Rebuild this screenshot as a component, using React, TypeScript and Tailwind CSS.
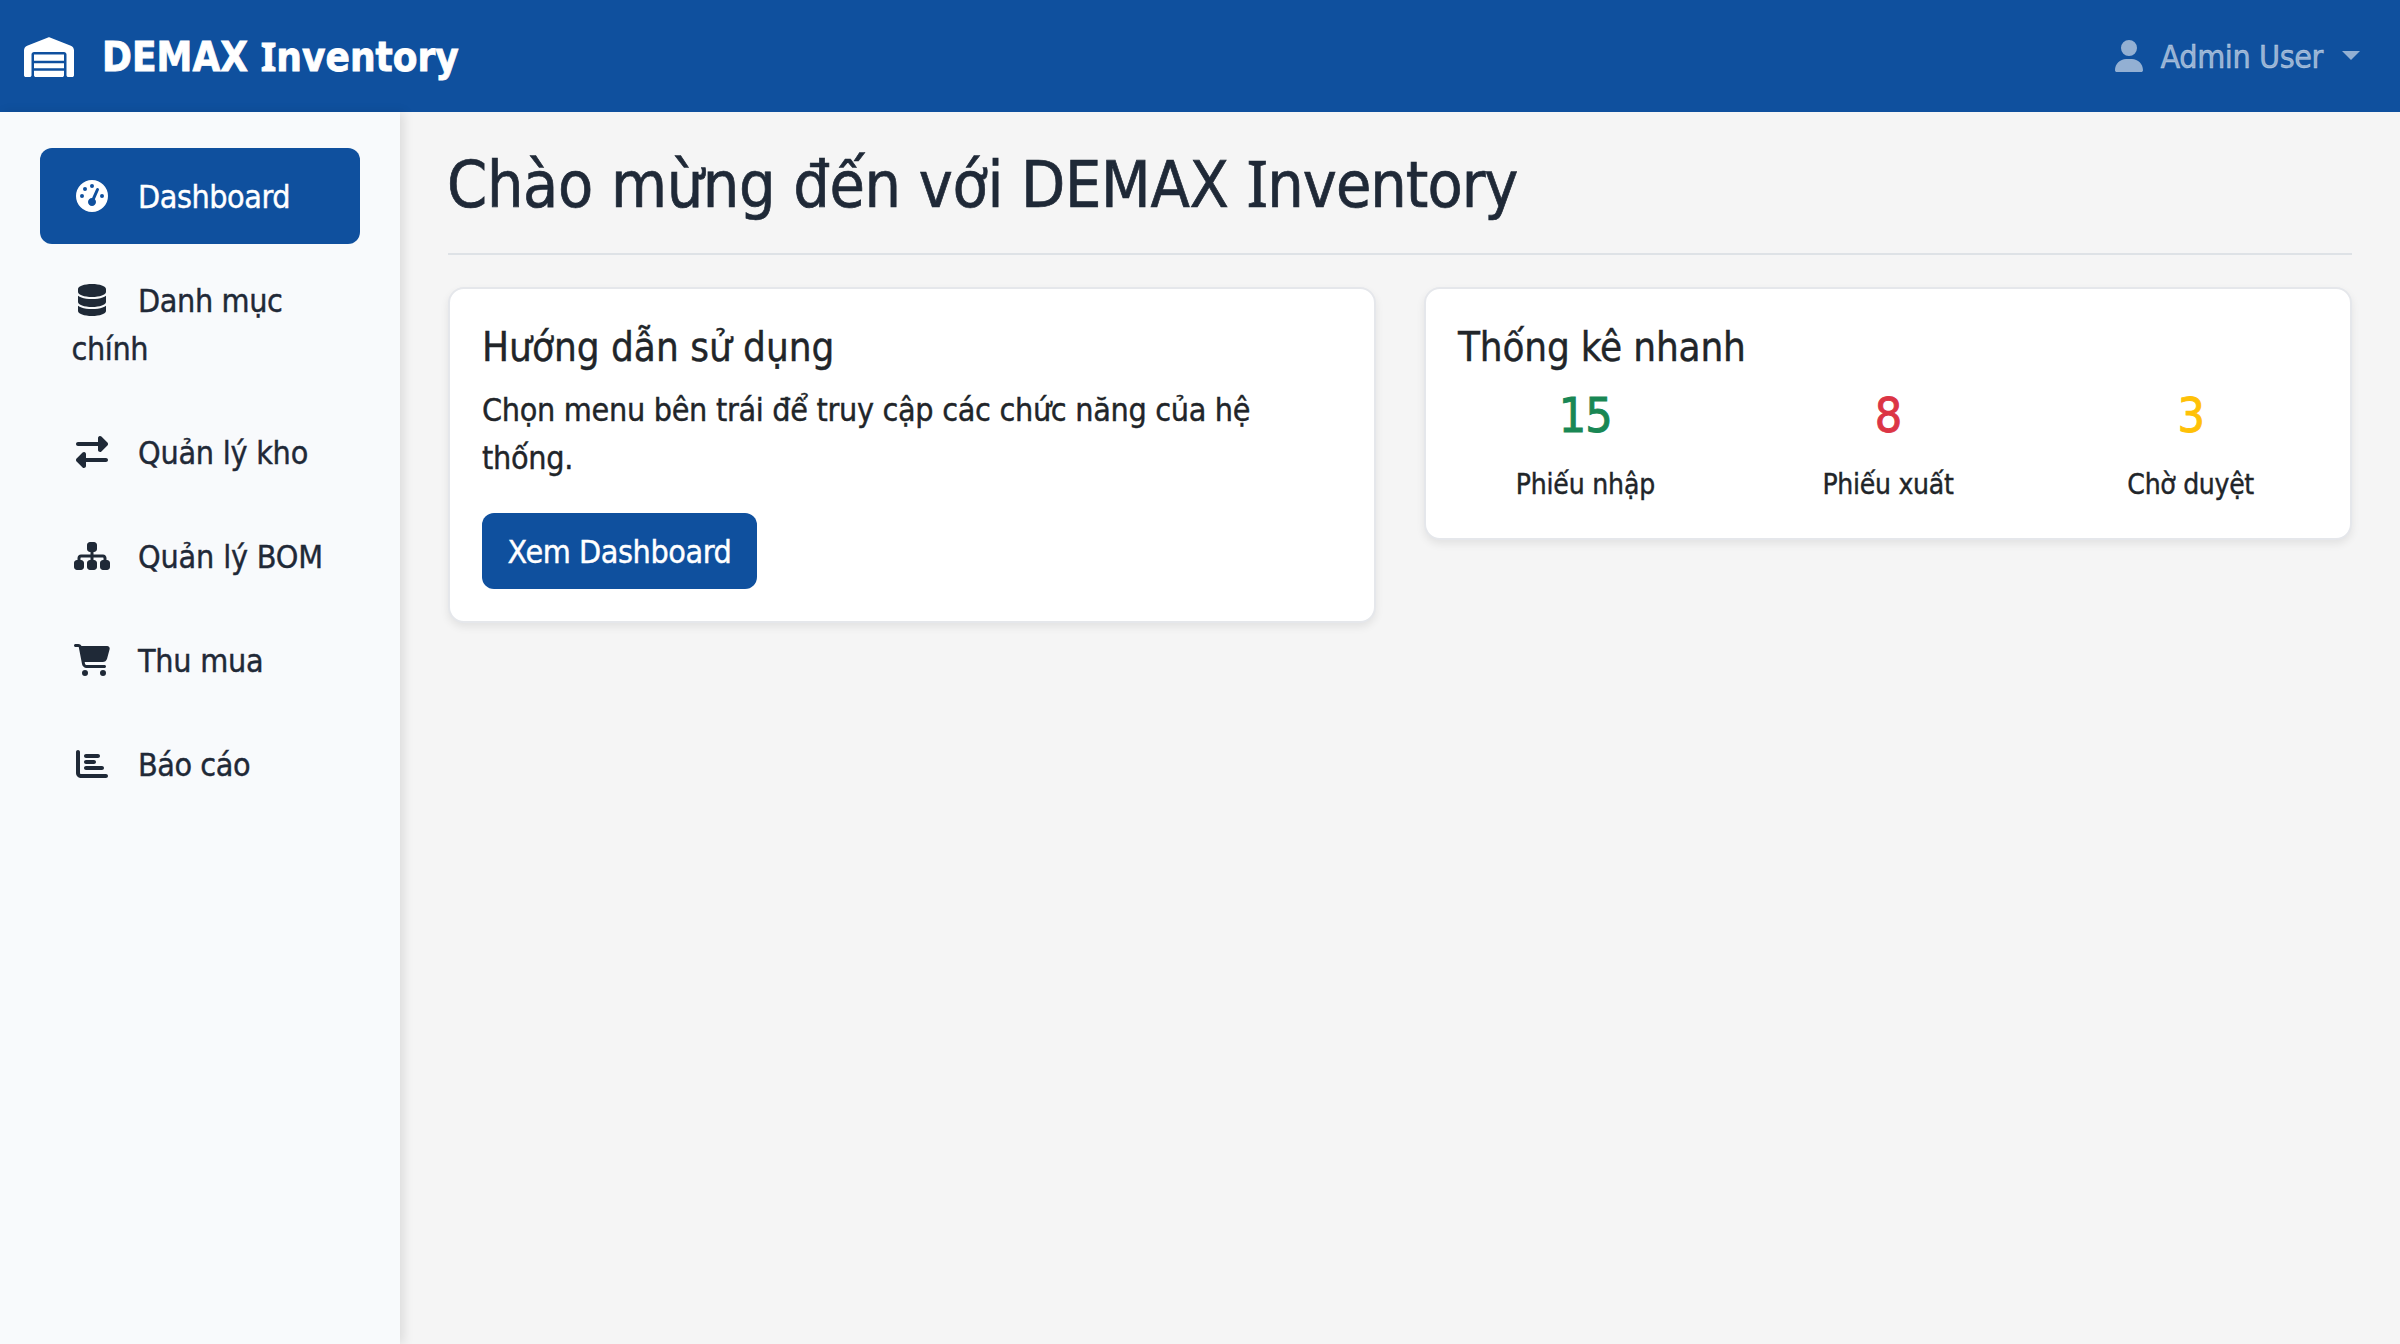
import type { IconType } from 'react-icons';
import {
  FaCartShopping,
  FaChartBar,
  FaDatabase,
  FaGaugeHigh,
  FaRightLeft,
  FaSitemap,
  FaUser,
  FaWarehouse,
} from 'react-icons/fa6';

type NavItem = { label: string; icon: IconType; size: string; tracking: string; active?: boolean };

const navItems: NavItem[] = [
  { label: 'Dashboard', icon: FaGaugeHigh, size: 'w-8 h-8', tracking: 'tracking-[-0.014em]', active: true },
  { label: 'Danh mục chính', icon: FaDatabase, size: 'w-7 h-8', tracking: 'tracking-[-0.012em]' },
  { label: 'Quản lý kho', icon: FaRightLeft, size: 'w-8 h-8', tracking: 'tracking-[-0.0075em]' },
  { label: 'Quản lý BOM', icon: FaSitemap, size: 'w-9 h-8', tracking: 'tracking-[-0.005em]' },
  { label: 'Thu mua', icon: FaCartShopping, size: 'w-9 h-8', tracking: 'tracking-[-0.0079em]' },
  { label: 'Báo cáo', icon: FaChartBar, size: 'w-8 h-8', tracking: 'tracking-[-0.014em]' },
];

const stats = [
  { value: '15', label: 'Phiếu nhập', color: 'text-[#198754]', tracking: 'tracking-[-0.006em]' },
  { value: '8', label: 'Phiếu xuất', color: 'text-[#dc3545]', tracking: 'tracking-[-0.0097em]' },
  { value: '3', label: 'Chờ duyệt', color: 'text-[#ffc107]', tracking: 'tracking-[-0.0105em]' },
];

function Navbar() {
  return (
    <header className="flex h-28 shrink-0 items-center justify-between bg-[#0f509e] pl-6 pr-[40px]">
      <a className="flex items-center text-[40px] leading-[60px] font-bold tracking-[0.001em] text-white [-webkit-text-stroke:0.8px]">
        <FaWarehouse className="mt-0.5 h-10 w-[50px]" />
        <span className="ml-[28px] pt-px whitespace-pre">
          DEMAX{' '}
          <span className="inline-block first-letter:font-['Noto_Sans']">Inventory</span>
        </span>
      </a>
      <div className="flex items-center text-white/55">
        <FaUser className="h-8 w-7" />
        <span className="ml-[18px] pt-px leading-[48px] tracking-[-0.0126em]">Admin User</span>
        <span className="-mt-0.5 ml-[19px] h-0 w-0 border-x-[9.6px] border-t-[9.6px] border-x-transparent border-t-current" />
      </div>
    </header>
  );
}

function Sidebar() {
  return (
    <aside className="w-[400px] shrink-0 bg-[#f8fafc] px-10 pt-9 shadow-[4px_0_10px_rgba(0,0,0,0.1)]">
      <nav className="flex flex-col gap-2">
        {navItems.map(({ label, icon: Icon, size, tracking, active }) => (
          <a
            key={label}
            className={`block rounded-xl pt-[25px] pr-8 pb-[23px] pl-[31.5px] leading-[48px] ${tracking} ${
              active ? 'bg-[#0f509e] text-white' : 'text-[#1f2937]'
            }`}
          >
            <span className="mr-[26px] ml-[0.5px] inline-flex h-8 w-10 items-center justify-center align-[-4px]">
              <Icon className={size} />
            </span>
            {label}
          </a>
        ))}
      </nav>
    </aside>
  );
}

function GuideCard() {
  return (
    <section className="rounded-2xl border-2 border-[#e5e7eb] bg-white p-8 shadow-[0_4px_8px_rgba(0,0,0,0.08)]">
      <h5 className="mb-[14px] pt-[3px] text-[40px] leading-[47px]">Hướng dẫn sử dụng</h5>
      <p className="mb-8 pt-px leading-[48px] tracking-[-0.0095em]">
        Chọn menu bên trái để truy cập các chức năng của hệ thống.
      </p>
      <button className="-mt-px block h-[76px] w-[275px] rounded-xl bg-[#0f509e] pt-0.5 leading-[48px] tracking-[-0.013em] text-white">
        Xem Dashboard
      </button>
    </section>
  );
}

function StatsCard() {
  return (
    <section className="h-[253px] rounded-2xl border-2 border-[#e5e7eb] bg-white p-8 shadow-[0_4px_8px_rgba(0,0,0,0.08)]">
      <h5 className="mb-[14px] pt-[3px] text-[40px] leading-[47px] tracking-[-0.0045em]">Thống kê nhanh</h5>
      <div className="-mx-6 grid grid-cols-3 text-center">
        {stats.map((s) => (
          <div key={s.label}>
            <div
              className={`mb-[18px] pt-0.5 text-[48px] leading-[56px] tracking-[-0.02em] [-webkit-text-stroke:0.9px] ${s.color}`}
            >
              {s.value}
            </div>
            <div className={`text-[28px] leading-[48px] ${s.tracking}`}>{s.label}</div>
          </div>
        ))}
      </div>
    </section>
  );
}

export default function App() {
  return (
    <div className="flex h-[1344px] w-[2400px] flex-col overflow-hidden bg-[#f5f5f5] font-['DejaVu_Sans_Condensed','Noto_Sans',sans-serif] text-[32px] text-[#212529] [-webkit-text-stroke:0.4px]">
      <Navbar />
      <div className="flex flex-1">
        <Sidebar />
        <main className="flex-1 px-12 pt-8">
          <h1 className="border-b-2 border-[#dee2e6] pb-[29px] -indent-px text-[64px] leading-[77px] tracking-[-0.005em] whitespace-nowrap text-[#1f2937] [-webkit-text-stroke:0.7px]">
            Chào mừng đến với DEMAX{' '}
            <span className="inline-block indent-0 tracking-[-0.0155em] first-letter:font-['Noto_Sans']">Inventory</span>
          </h1>
          <div className="mt-8 grid grid-cols-2 items-start gap-12">
            <GuideCard />
            <StatsCard />
          </div>
        </main>
      </div>
    </div>
  );
}
